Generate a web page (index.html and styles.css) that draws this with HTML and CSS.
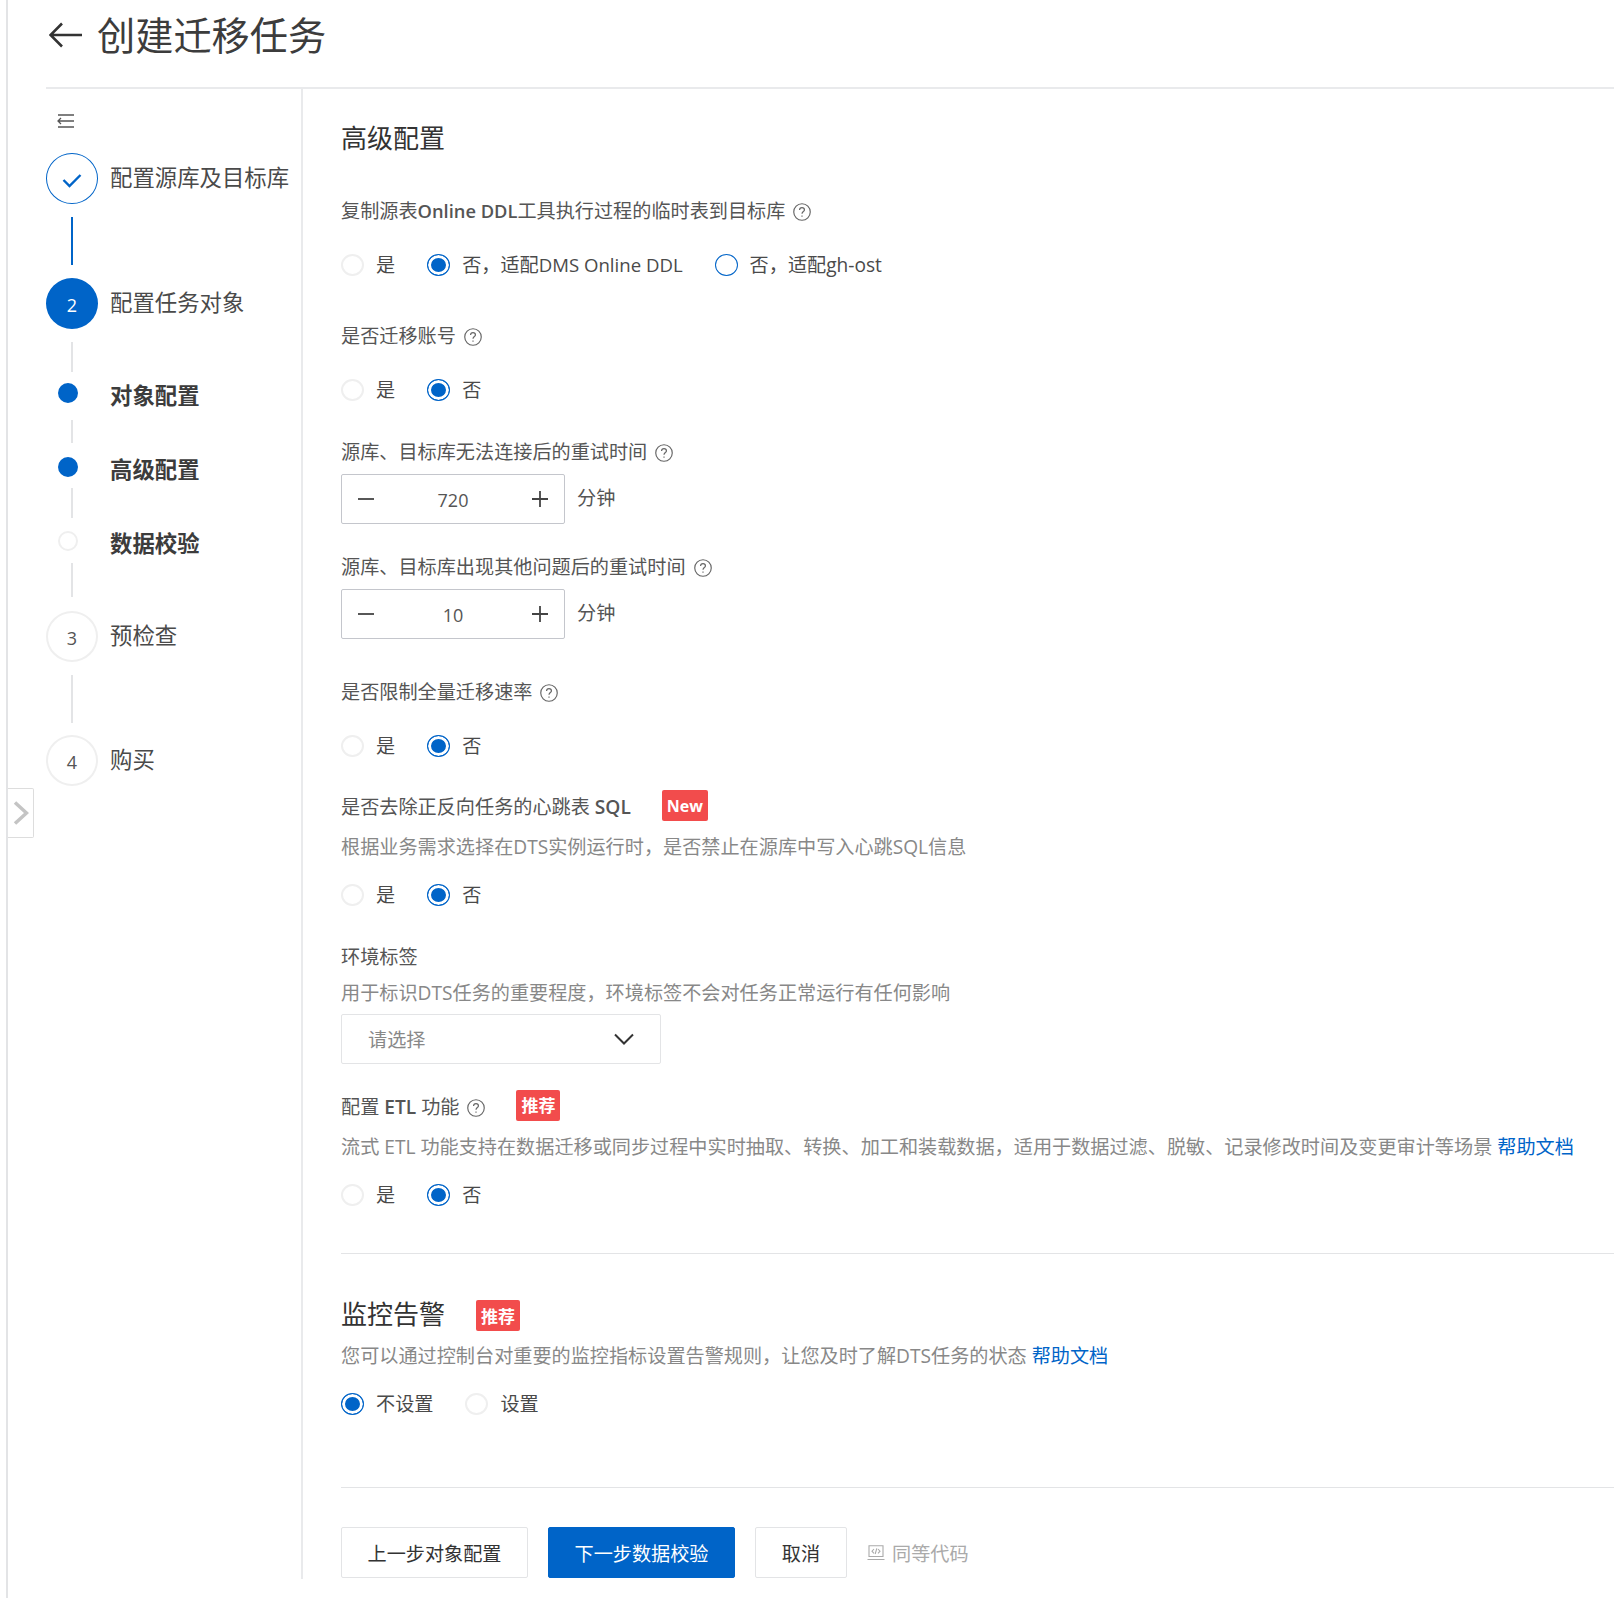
FILE: index.html
```html
<!DOCTYPE html>
<html lang="zh-CN">
<head>
    <meta charset="UTF-8">
    <title>创建迁移任务</title>
    <link rel="stylesheet" href="styles.css">
</head>
<body>
<div class="page">
    <!-- Header -->
    <div class="page-header">
        <svg class="back-icon" width="34" height="26" viewBox="0 0 34 26"><path d="M33 13H2M13 1.5L1.5 13L13 24.500"/></svg>
        <h1 class="page-title">创建迁移任务</h1>
    </div>

    <div class="page-body">
        <!-- Step sidebar -->
        <div class="sidebar">
            <svg class="collapse-icon" width="18" height="14" viewBox="0 0 18 14"><path d="M1 1H17M1 7H17M1 13H17M4 4L1 7L4 10"/></svg>

            <div class="step step-first">
                <div class="step-circle step-done">
                    <svg width="20" height="15" viewBox="0 0 20 15"><path d="M1.500 7L7.500 13L18.500 2"/></svg>
                </div>
                <span>配置源库及目标库</span>
            </div>
            <div class="connector connector-blue conn-48"></div>
            <div class="step">
                <div class="step-circle step-active">2</div>
                <span>配置任务对象</span>
            </div>
            <div class="connector conn-30"></div>
            <div class="substep sub-1"><i class="dot dot-on"></i><span>对象配置</span></div>
            <div class="connector conn-23"></div>
            <div class="substep sub-2"><i class="dot dot-on"></i><span>高级配置</span></div>
            <div class="connector conn-30"></div>
            <div class="substep sub-3"><i class="dot"></i><span>数据校验</span></div>
            <div class="connector conn-34"></div>
            <div class="step step-after-sub">
                <div class="step-circle">3</div>
                <span>预检查</span>
            </div>
            <div class="connector conn-48"></div>
            <div class="step step-last">
                <div class="step-circle">4</div>
                <span>购买</span>
            </div>
        </div>

        <!-- Form -->
        <div class="content">
            <h2 class="section-title">高级配置</h2>

            <div class="field field-first">
                <div class="field-label">
                    <span>复制源表<b class="latin-small">Online DDL</b>工具执行过程的临时表到目标库</span>
                    <svg class="help-icon" width="18" height="18" viewBox="0 0 17 17"><circle cx="8.500" cy="8.500" r="7.800"/><path d="M6.200 6.700C6.200 5.300 7.200 4.400 8.500 4.400C9.800 4.400 10.800 5.300 10.800 6.500C10.800 8 8.500 8.200 8.500 10.200M8.500 11.700V13"/></svg>
                </div>
                <div class="radio-group">
                    <label class="radio"><i class="radio-dot"></i>是</label>
                    <label class="radio"><i class="radio-dot checked"></i><span>否，适配<span class="latin-radio">DMS Online DDL</span></span></label>
                    <label class="radio"><i class="radio-dot focus"></i>否，适配gh-ost</label>
                </div>
            </div>

            <div class="field field-47">
                <div class="field-label">
                    <span>是否迁移账号</span>
                    <svg class="help-icon" width="18" height="18" viewBox="0 0 17 17"><circle cx="8.500" cy="8.500" r="7.800"/><path d="M6.200 6.700C6.200 5.300 7.200 4.400 8.500 4.400C9.800 4.400 10.800 5.300 10.800 6.500C10.800 8 8.500 8.200 8.500 10.200M8.500 11.700V13"/></svg>
                </div>
                <div class="radio-group">
                    <label class="radio"><i class="radio-dot"></i>是</label>
                    <label class="radio"><i class="radio-dot checked"></i>否</label>
                </div>
            </div>

            <div class="field">
                <div class="field-label">
                    <span>源库、目标库无法连接后的重试时间</span>
                    <svg class="help-icon" width="18" height="18" viewBox="0 0 17 17"><circle cx="8.500" cy="8.500" r="7.800"/><path d="M6.200 6.700C6.200 5.300 7.200 4.400 8.500 4.400C9.800 4.400 10.800 5.300 10.800 6.500C10.800 8 8.500 8.200 8.500 10.200M8.500 11.700V13"/></svg>
                </div>
                <div class="number-row">
                    <div class="number-input">
                        <svg width="18" height="18" viewBox="0 0 18 18"><path d="M1 9H17"/></svg>
                        <span>720</span>
                        <svg width="18" height="18" viewBox="0 0 18 18"><path d="M1 9H17M9 1V17"/></svg>
                    </div>
                    <span class="unit">分钟</span>
                </div>
            </div>

            <div class="field field-31">
                <div class="field-label">
                    <span>源库、目标库出现其他问题后的重试时间</span>
                    <svg class="help-icon" width="18" height="18" viewBox="0 0 17 17"><circle cx="8.500" cy="8.500" r="7.800"/><path d="M6.200 6.700C6.200 5.300 7.200 4.400 8.500 4.400C9.800 4.400 10.800 5.300 10.800 6.500C10.800 8 8.500 8.200 8.500 10.200M8.500 11.700V13"/></svg>
                </div>
                <div class="number-row">
                    <div class="number-input">
                        <svg width="18" height="18" viewBox="0 0 18 18"><path d="M1 9H17"/></svg>
                        <span>10</span>
                        <svg width="18" height="18" viewBox="0 0 18 18"><path d="M1 9H17M9 1V17"/></svg>
                    </div>
                    <span class="unit">分钟</span>
                </div>
            </div>

            <div class="field field-41">
                <div class="field-label">
                    <span>是否限制全量迁移速率</span>
                    <svg class="help-icon" width="18" height="18" viewBox="0 0 17 17"><circle cx="8.500" cy="8.500" r="7.800"/><path d="M6.200 6.700C6.200 5.300 7.200 4.400 8.500 4.400C9.800 4.400 10.800 5.300 10.800 6.500C10.800 8 8.500 8.200 8.500 10.200M8.500 11.700V13"/></svg>
                </div>
                <div class="radio-group">
                    <label class="radio"><i class="radio-dot"></i>是</label>
                    <label class="radio"><i class="radio-dot checked"></i>否</label>
                </div>
            </div>

            <div class="field field-37">
                <div class="field-label">
                    <span>是否去除正反向任务的心跳表 <b>SQL</b></span>
                    <span class="badge badge-new">New</span>
                </div>
                <div class="field-hint">根据业务需求选择在DTS实例运行时，是否禁止在源库中写入心跳SQL信息</div>
                <div class="radio-group radio-group-hint">
                    <label class="radio"><i class="radio-dot"></i>是</label>
                    <label class="radio"><i class="radio-dot checked"></i>否</label>
                </div>
            </div>

            <div class="field">
                <div class="field-label"><span>环境标签</span></div>
                <div class="field-hint hint-tight">用于标识DTS任务的重要程度，环境标签不会对任务正常运行有任何影响</div>
                <div class="select">
                    <span>请选择</span>
                    <svg width="20" height="12" viewBox="0 0 20 12"><path d="M1 1.500L10 10.500L19 1.500"/></svg>
                </div>
            </div>

            <div class="field field-31">
                <div class="field-label">
                    <span>配置 <b>ETL</b> 功能</span>
                    <svg class="help-icon" width="18" height="18" viewBox="0 0 17 17"><circle cx="8.500" cy="8.500" r="7.800"/><path d="M6.200 6.700C6.200 5.300 7.200 4.400 8.500 4.400C9.800 4.400 10.800 5.300 10.800 6.500C10.800 8 8.500 8.200 8.500 10.200M8.500 11.700V13"/></svg>
                    <span class="badge">推荐</span>
                </div>
                <div class="field-hint">流式 ETL 功能支持在数据迁移或同步过程中实时抽取、转换、加工和装载数据，适用于数据过滤、脱敏、记录修改时间及变更审计等场景 <a href="#">帮助文档</a></div>
                <div class="radio-group radio-group-hint">
                    <label class="radio"><i class="radio-dot"></i>是</label>
                    <label class="radio"><i class="radio-dot checked"></i>否</label>
                </div>
            </div>

            <div class="divider divider-top"></div>

            <div class="section-head">
                <h2 class="section-title">监控告警</h2>
                <span class="badge">推荐</span>
            </div>
            <div class="field-hint hint-tight">您可以通过控制台对重要的监控指标设置告警规则，让您及时了解DTS任务的状态 <a href="#">帮助文档</a></div>
            <div class="radio-group radio-group-hint">
                <label class="radio"><i class="radio-dot checked"></i>不设置</label>
                <label class="radio"><i class="radio-dot"></i>设置</label>
            </div>

            <div class="divider divider-bottom"></div>

            <!-- Footer buttons -->
            <div class="footer">
                <button class="btn btn-wide">上一步对象配置</button>
                <button class="btn btn-wide btn-primary">下一步数据校验</button>
                <button class="btn btn-small">取消</button>
                <span class="code-link">
                    <svg width="18" height="16" viewBox="0 0 18 16"><path d="M2 .8H16V11.500H2ZM.5 14.500H17.500M7 4L5 6.200L7 8.400M11 4L13 6.200L11 8.400M9.800 3.400L8.200 9"/></svg>
                    同等代码
                </span>
            </div>
        </div>
    </div>

    <!-- Sidebar expand tab -->
    <div class="expand-tab">
        <svg width="16" height="24" viewBox="0 0 16 24"><path d="M2 1.500L13.500 12L2 22.500"/></svg>
    </div>
</div>
</body>
</html>
```
FILE: styles.css
```css
* {
    box-sizing: border-box;
}

html,
body {
    margin: 0;
    background: #fff;
}

body {
    font-family: "Open Sans", "Noto Sans CJK SC", sans-serif;
    font-size: 19.15px;
    color: #555;
    overflow: hidden;
}

.page {
    position: relative;
    height: 1598px;
    margin-left: 6px;
    padding-left: 38px;
    border-left: 2px solid #e3e4e6;
}

/* Header */
.page-header {
    display: flex;
    align-items: center;
    gap: 14px;
    height: 89px;
    padding: 0 0 17px 3px;
    border-bottom: 2px solid #e9eaec;
}

.back-icon {
    fill: none;
    stroke: #333;
    stroke-width: 2.6;
}

.page-title {
    margin: 0;
    font-size: 38.2px;
    line-height: 50px;
    font-weight: 400;
    color: #3c3c3c;
}

.page-body {
    display: flex;
    height: 1490px;
}

/* Sidebar */
.sidebar {
    flex: 0 0 257px;
    border-right: 2px solid #e9eaec;
    padding-top: 25px;
    font-size: 22.4px;
    color: #4a4a4a;
}

.collapse-icon {
    display: block;
    margin-left: 11px;
    fill: none;
    stroke: #555;
    stroke-width: 1.300;
}

.step {
    display: flex;
    align-items: center;
    gap: 12px;
    height: 51px;
    margin: 13px 0;
}

.step > span {
    margin-top: -4px;
}

.step-first {
    margin-top: 25px;
}

.step-circle {
    display: flex;
    align-items: center;
    justify-content: center;
    width: 52px;
    height: 51px;
    padding-top: 2px;
    border: 2px solid #efefef;
    border-radius: 50%;
    font-size: 18px;
    color: #555;
}

.step-done {
    border: 1px solid #0064c8;
}

.step-done svg {
    fill: none;
    stroke: #0064c8;
    stroke-width: 2.400;
    margin-top: 1px;
}

.step-active {
    background: #0064c8;
    border-color: #0064c8;
    color: #fff;
}

.connector {
    width: 2px;
    margin-left: 25px;
    background: #e3e4e6;
}

.connector-blue {
    background: #0064c8;
}

.conn-48 { height: 48px; }
.conn-34 { height: 34px; }
.conn-30 { height: 30px; }
.conn-23 { height: 23px; }

.substep {
    display: flex;
    align-items: center;
    height: 24px;
    font-weight: 700;
    color: #3c3c3c;
}

.sub-1 { margin: 10px 0 14px; }
.sub-2 { margin: 13px 0 8px; }
.sub-3 { margin: 12px 0 9px; }

.step-after-sub {
    margin-top: 14px;
}

.step-last {
    margin-top: 12px;
}

.dot {
    width: 20px;
    height: 20px;
    margin: -2px 32px 0 12px;
    border: 2px solid #efefef;
    border-radius: 50%;
}

.dot-on {
    background: #0064c8;
    border-color: #0064c8;
}

.expand-tab {
    position: absolute;
    top: 788px;
    left: 0;
    display: flex;
    align-items: center;
    justify-content: center;
    width: 26px;
    height: 50px;
    background: #fff;
    border: 1px solid #ddd;
    border-left: none;
    border-radius: 0 2px 2px 0;
}

.expand-tab svg {
    fill: none;
    stroke: #c4c4c4;
    stroke-width: 3.500;
}

/* Form */
.content {
    flex: 1;
    min-width: 0;
    padding: 31px 0 0 38px;
}

.section-title {
    margin: 0;
    font-size: 26px;
    line-height: 36px;
    font-weight: 400;
    color: #333;
}

.field {
    margin-top: 38px;
}

.field-first { margin-top: 43px; }
.field-47 { margin-top: 47px; }
.field-41 { margin-top: 41px; }
.field-37 { margin-top: 37px; }
.field-31 { margin-top: 31px; }

.field-label {
    display: flex;
    align-items: center;
    height: 24px;
    line-height: 24px;
    white-space: nowrap;
}

.field-label b {
    font-weight: 600;
}

.latin-small {
    font-size: 18.300px;
}

.latin-radio {
    font-size: 18.600px;
}

.help-icon {
    margin: 2px 0 0 8px;
    fill: none;
    stroke: #666;
    stroke-width: 1.100;
}

.badge {
    display: flex;
    align-items: center;
    justify-content: center;
    width: 44px;
    height: 31px;
    margin: -3px 0 0 31px;
    border-radius: 2px;
    background: #f24c4c;
    color: #fff;
    font-size: 17px;
    font-weight: 700;
}

.badge-new {
    width: 46px;
    font-size: 16px;
}

.section-head .badge {
    margin-top: 2px;
}

.field-hint {
    margin-top: 16px;
    line-height: 24px;
    color: #888;
    white-space: nowrap;
}

.hint-tight {
    margin-top: 12px;
}

.field-hint a {
    color: #0064c8;
    text-decoration: none;
}

.radio-group {
    display: flex;
    gap: 32px;
    height: 24px;
    margin-top: 30px;
}

.radio-group-hint {
    margin-top: 24px;
}

.radio {
    display: flex;
    align-items: center;
    gap: 12px;
    line-height: 24px;
    color: #4a4a4a;
    white-space: nowrap;
}

.radio-dot {
    flex: none;
    width: 23px;
    height: 22px;
    border: 2px solid #efefef;
    border-radius: 50%;
}

.radio-dot.focus {
    border: 1.500px solid #0064c8;
}

.radio-dot.checked {
    border: 1.500px solid #0064c8;
    background: #0064c8;
    box-shadow: inset 0 0 0 3px #fff;
}

.number-row {
    display: flex;
    align-items: center;
    gap: 12px;
    margin-top: 10px;
}

.number-input {
    display: flex;
    align-items: center;
    justify-content: space-between;
    width: 224px;
    height: 50px;
    padding: 0 15px;
    border: 1px solid #c4c6cc;
    border-radius: 2px;
    font-size: 18px;
    color: #555;
}

.number-input span {
    margin-top: 2px;
}

.number-input svg {
    fill: none;
    stroke: #444;
    stroke-width: 1.800;
}

.unit {
    margin-top: -5px;
}

.select {
    display: flex;
    align-items: center;
    justify-content: space-between;
    width: 320px;
    height: 50px;
    margin-top: 9px;
    padding: 0 26px;
    border: 1px solid #e3e4e6;
    border-radius: 2px;
    color: #888;
}

.select svg {
    fill: none;
    stroke: #333;
    stroke-width: 2;
}

.divider {
    height: 1px;
    background: #e3e4e6;
}

.divider-top {
    margin: 46px 0 42px;
}

.divider-bottom {
    margin: 71px 0 39px;
}

.section-head {
    display: flex;
    align-items: center;
}

/* Footer */
.footer {
    display: flex;
    align-items: center;
    gap: 20px;
}

.btn {
    height: 51px;
    padding: 0;
    border: 1px solid #e3e4e6;
    border-radius: 2px;
    background: #fff;
    font-family: inherit;
    font-size: 19.15px;
    color: #333;
}

.btn-wide {
    width: 187px;
}

.btn-small {
    width: 92px;
}

.btn-primary {
    background: #0064c8;
    border-color: #0064c8;
    color: #fff;
}

.code-link {
    display: flex;
    align-items: center;
    gap: 7px;
    color: #aaa;
}

.code-link svg {
    fill: none;
    stroke: #aaa;
    stroke-width: 1.100;
}
```
